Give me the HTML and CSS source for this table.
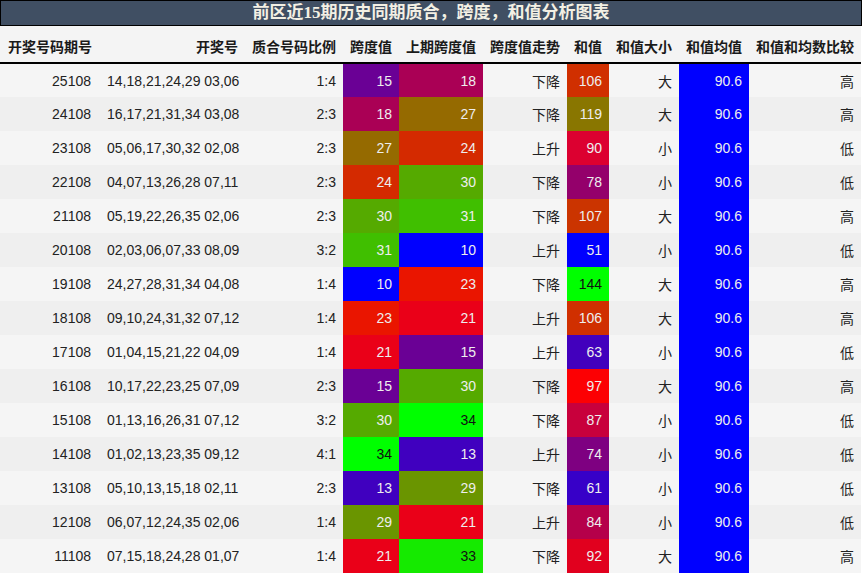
FILE: index.html
```html
<!DOCTYPE html>
<html lang="zh">
<head>
<meta charset="utf-8">
<title>前区近15期历史同期质合，跨度，和值分析图表</title>
<link rel="stylesheet" href="styles.css">
</head>
<body>
<div class="chart">
  <div class="title">前区近15期历史同期质合，跨度，和值分析图表</div>
  <table class="grid">
    <colgroup>
      <col class="w1"><col class="w2"><col class="w3"><col class="w4"><col class="w5">
      <col class="w6"><col class="w7"><col class="w8"><col class="w9"><col class="w10">
    </colgroup>
    <thead>
      <tr>
        <th>开奖号码期号</th><th>开奖号</th><th>质合号码比例</th><th>跨度值</th><th>上期跨度值</th>
        <th>跨度值走势</th><th>和值</th><th>和值大小</th><th>和值均值</th><th>和值和均数比较</th>
      </tr>
    </thead>
    <tbody>
      <tr><td>25108</td><td>14,18,21,24,29 03,06</td><td>1:4</td><td class="hc" style="background:#6a0095">15</td><td class="hc" style="background:#aa0055">18</td><td>下降</td><td class="hc" style="background:#d02f00">106</td><td>大</td><td class="avg">90.6</td><td>高</td></tr>
      <tr><td>24108</td><td>16,17,21,31,34 03,08</td><td>2:3</td><td class="hc" style="background:#aa0055">18</td><td class="hc" style="background:#956a00">27</td><td>下降</td><td class="hc" style="background:#897600">119</td><td>大</td><td class="avg">90.6</td><td>高</td></tr>
      <tr><td>23108</td><td>05,06,17,30,32 02,08</td><td>2:3</td><td class="hc" style="background:#956a00">27</td><td class="hc" style="background:#d42a00">24</td><td>上升</td><td class="hc" style="background:#dc0030">90</td><td>小</td><td class="avg">90.6</td><td>低</td></tr>
      <tr><td>22108</td><td>04,07,13,26,28 07,11</td><td>2:3</td><td class="hc" style="background:#d42a00">24</td><td class="hc" style="background:#55aa00">30</td><td>下降</td><td class="hc" style="background:#94006b">78</td><td>小</td><td class="avg">90.6</td><td>低</td></tr>
      <tr><td>21108</td><td>05,19,22,26,35 02,06</td><td>2:3</td><td class="hc" style="background:#55aa00">30</td><td class="hc" style="background:#40bf00">31</td><td>下降</td><td class="hc" style="background:#cb3400">107</td><td>大</td><td class="avg">90.6</td><td>高</td></tr>
      <tr><td>20108</td><td>02,03,06,07,33 08,09</td><td>3:2</td><td class="hc" style="background:#40bf00">31</td><td class="hc" style="background:#0000ff">10</td><td>上升</td><td class="hc" style="background:#0000ff">51</td><td>小</td><td class="avg">90.6</td><td>低</td></tr>
      <tr><td>19108</td><td>24,27,28,31,34 04,08</td><td>1:4</td><td class="hc" style="background:#0000ff">10</td><td class="hc" style="background:#ea1500">23</td><td>下降</td><td class="hc dark" style="background:#00ff00">144</td><td>大</td><td class="avg">90.6</td><td>高</td></tr>
      <tr><td>18108</td><td>09,10,24,31,32 07,12</td><td>1:4</td><td class="hc" style="background:#ea1500">23</td><td class="hc" style="background:#ea0018">21</td><td>上升</td><td class="hc" style="background:#d02f00">106</td><td>大</td><td class="avg">90.6</td><td>高</td></tr>
      <tr><td>17108</td><td>01,04,15,21,22 04,09</td><td>1:4</td><td class="hc" style="background:#ea0018">21</td><td class="hc" style="background:#6a0095">15</td><td>上升</td><td class="hc" style="background:#4200bd">63</td><td>小</td><td class="avg">90.6</td><td>低</td></tr>
      <tr><td>16108</td><td>10,17,22,23,25 07,09</td><td>2:3</td><td class="hc" style="background:#6a0095">15</td><td class="hc" style="background:#55aa00">30</td><td>下降</td><td class="hc" style="background:#fc0003">97</td><td>大</td><td class="avg">90.6</td><td>高</td></tr>
      <tr><td>15108</td><td>01,13,16,26,31 07,12</td><td>3:2</td><td class="hc" style="background:#55aa00">30</td><td class="hc dark" style="background:#00ff00">34</td><td>下降</td><td class="hc" style="background:#c8003c">87</td><td>小</td><td class="avg">90.6</td><td>低</td></tr>
      <tr><td>14108</td><td>01,02,13,23,35 09,12</td><td>4:1</td><td class="hc dark" style="background:#00ff00">34</td><td class="hc" style="background:#4000bf">13</td><td>上升</td><td class="hc" style="background:#7e0081">74</td><td>小</td><td class="avg">90.6</td><td>低</td></tr>
      <tr><td>13108</td><td>05,10,13,15,18 02,11</td><td>2:3</td><td class="hc" style="background:#4000bf">13</td><td class="hc" style="background:#6a9500">29</td><td>下降</td><td class="hc" style="background:#3700c8">61</td><td>小</td><td class="avg">90.6</td><td>低</td></tr>
      <tr><td>12108</td><td>06,07,12,24,35 02,06</td><td>1:4</td><td class="hc" style="background:#6a9500">29</td><td class="hc" style="background:#ea0018">21</td><td>上升</td><td class="hc" style="background:#b5004a">84</td><td>小</td><td class="avg">90.6</td><td>低</td></tr>
      <tr><td>11108</td><td>07,15,18,24,28 01,07</td><td>1:4</td><td class="hc" style="background:#ea0018">21</td><td class="hc dark" style="background:#15ea00">33</td><td>下降</td><td class="hc" style="background:#e1001e">92</td><td>大</td><td class="avg">90.6</td><td>高</td></tr>
    </tbody>
  </table>
</div>
</body>
</html>
```
FILE: styles.css
```css
html, body {
  margin: 0;
  padding: 0;
  background: #ffffff;
}

.chart {
  width: 862px;
  font-family: "Liberation Sans", "Noto Sans CJK SC", sans-serif;
  color: #222222;
}

.title {
  box-sizing: border-box;
  height: 26px;
  line-height: 24px;
  border: 1px solid #000000;
  background: #404f63;
  color: #f3f0e4;
  font-family: "Liberation Serif", "Noto Sans CJK SC", serif;
  font-weight: bold;
  font-size: 17px;
  text-align: center;
}

.grid {
  width: 861px;
  table-layout: fixed;
  border-collapse: collapse;
  border-spacing: 0;
  font-size: 14px;
}

.w1 { width: 100px; }
.w2 { width: 145px; }
.w3 { width: 98px; }
.w4 { width: 56px; }
.w5 { width: 84px; }
.w6 { width: 84px; }
.w7 { width: 42px; }
.w8 { width: 70px; }
.w9 { width: 70px; }
.w10 { width: 112px; }

.grid th {
  background: #f4f4f4;
  height: 37px;
  padding: 3px 7px 0 7px;
  box-sizing: border-box;
  font-weight: bold;
  text-align: right;
  white-space: nowrap;
  border-bottom: 2px solid #000000;
  color: #1a1a1a;
}

.grid th:first-child {
  text-align: left;
  padding-left: 8px;
}

.grid td {
  height: 34px;
  padding: 0 7px;
  box-sizing: border-box;
  text-align: right;
  white-space: nowrap;
  vertical-align: middle;
}

.grid td:first-child {
  padding-right: 9px;
}

.grid tbody tr:nth-child(odd) {
  background: #f5f5f5;
}

.grid tbody tr:nth-child(even) {
  background: #efefef;
}

.grid td.hc {
  color: #eeeeee;
}

.grid td.hc.dark {
  color: #111111;
}

.grid td.avg {
  background: #0000ff;
  color: #eeeeee;
}
```
